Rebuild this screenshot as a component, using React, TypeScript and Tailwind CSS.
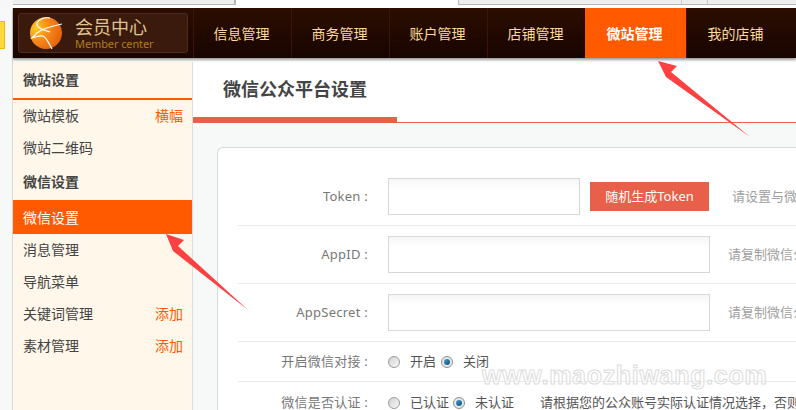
import React from 'react';

const font = "font-['Noto_Sans','Noto_Sans_CJK_SC',sans-serif]";

const navItems = ['信息管理', '商务管理', '账户管理', '店铺管理', '微站管理', '我的店铺'];

const Radio = ({ checked }: { checked?: boolean }) =>
  checked ? (
    <span className="flex h-3 w-3 shrink-0 items-center justify-center rounded-full border border-[#8a8f94] bg-[#e8e8e8]">
      <span className="h-[6px] w-[6px] rounded-full bg-gradient-to-br from-[#3f9fd0] to-[#0a4f7d]" />
    </span>
  ) : (
    <span className="h-3 w-3 shrink-0 rounded-full border border-[#9a9a9a] bg-gradient-to-br from-[#d0d0d0] to-[#fafafa]" />
  );

const SideRow = ({ label, action }: { label: string; action?: string }) => (
  <div className="flex h-8 items-center justify-between pb-[2px] pl-[10px] pr-[9px] text-[14px] text-[#444]">
    <span>{label}</span>
    {action && <span className="text-[#ff5a00]">{action}</span>}
  </div>
);

const FormRow = ({ label, children, className }: { label: string; children: React.ReactNode; className: string }) => (
  <div className={`flex items-center border-b border-[#e8ecea] ${className}`}>
    <div className="w-[130px] shrink-0 text-right text-[13px] tracking-[0.25px] text-[#777]">{label}</div>
    <div className="ml-5 flex items-center whitespace-nowrap text-[13px]">{children}</div>
  </div>
);

const TextBox = ({ width }: { width: string }) => (
  <div className={`h-[37px] shrink-0 border border-[#d8d8d8] bg-gradient-to-b from-[#f6f6f6] to-white to-30% ${width}`} />
);

export default function App() {
  return (
    <div className={`relative flex h-[410px] w-[796px] flex-col overflow-hidden bg-[#f6f9f8] ${font}`}>
      {/* browser strip */}
      <div className="flex h-2 shrink-0 bg-white">
        <div className="w-[13px] bg-[#f7f7f7]" />
        <div className="h-[5px] w-[223px] border-b border-r-2 border-[#b8b8b8] bg-[#eeeeee]" />
        <div className="ml-[222px] flex h-[5px] flex-1 border-b border-l border-[#b8b8b8] bg-[#eeeeee]">
          <div className="w-[223px] border-r border-[#c8c8c8]" />
          <div className="w-[26px] border-r border-[#c8c8c8]" />
        </div>
      </div>

      <div className="flex min-h-0 flex-1">
        <div className="w-[13px] shrink-0 border-r border-[#d8d8d8] pt-[13px]">
          <div className="h-7 w-[5px] border-y border-r border-[#f5b400] bg-[#ffd83a]" />
        </div>

        <div className="flex min-w-0 flex-1 flex-col">
          {/* top nav */}
          <div className="flex h-[50px] shrink-0 bg-gradient-to-b from-[#2c0e00] to-[#180500] shadow-[0_2px_2px_rgba(0,0,0,0.35)]">
            <div className="flex w-[180px] shrink-0 items-center pl-[5px]">
              <div className="flex h-10 w-[170px] items-center rounded-[3px] border border-[#4f2c18] bg-[#3a1a0c] pl-[11px]">
                <svg width="32" height="32" viewBox="0 0 32 32" className="shrink-0">
                  <defs>
                    <radialGradient id="ball" cx="0.2" cy="0.35" r="0.9">
                      <stop offset="0" stopColor="#ffcb25" />
                      <stop offset="0.45" stopColor="#f6891a" />
                      <stop offset="1" stopColor="#e25a0a" />
                    </radialGradient>
                  </defs>
                  <circle cx="16" cy="16" r="16" fill="url(#ball)" />
                  <path
                    d="M20 1C15 0 9 2 7 6C6 11 14 13 20 15M32 7C22 9 12 12 7 16C5 18 3 20 2 21C6 20 10 18 13 19C17 21 19 27 22 32"
                    fill="none"
                    stroke="#fff"
                    strokeWidth="1.2"
                  />
                </svg>
                <div className="ml-[13px] flex flex-col">
                  <span className="text-[18px] leading-[21px] text-[#e0c48f]">会员中心</span>
                  <span className="text-[11px] leading-[12px] tracking-[-0.1px] text-[#b07a1f]">Member center</span>
                </div>
              </div>
            </div>
            {navItems.map((item, i) => (
              <div
                key={item}
                className={
                  i === 4
                    ? 'flex w-[101px] shrink-0 items-center justify-center bg-[#ff5a00] pr-[2px] text-[14px] font-bold text-white'
                    : i === 5
                      ? 'flex w-[98px] shrink-0 items-center justify-center border-l border-[#3d1408] text-[14px] text-[#fdd99a]'
                      : 'flex w-[98px] shrink-0 items-center justify-center border-l border-[#3d1408] pr-[2px] text-[14px] text-[#fdd99a]'
                }
              >
                {item}
              </div>
            ))}
          </div>

          <div className="mt-1 flex min-h-0 flex-1">
            {/* sidebar */}
            <div className="w-[180px] shrink-0 border-r border-[#ddd] bg-[#fff7e9]">
              <div className="flex h-[38px] items-center border-b-2 border-[#ff5a00] pb-[2px] pl-[10px] text-[14px] font-bold text-[#444]">
                微站设置
              </div>
              <SideRow label="微站模板" action="横幅" />
              <SideRow label="微站二维码" />
              <div className="flex h-9 items-center pb-[2px] pl-[10px] text-[14px] font-bold text-[#444]">微信设置</div>
              <div className="flex h-[34px] items-center bg-[#ff5a00] pl-[10px] text-[14px] text-white">微信设置</div>
              <SideRow label="消息管理" />
              <SideRow label="导航菜单" />
              <SideRow label="关键词管理" action="添加" />
              <SideRow label="素材管理" action="添加" />
            </div>

            {/* main */}
            <div className="min-w-0 flex-1">
              <div className="h-[61px] border-b border-[#f0604a] bg-white">
                <div className="box-border flex h-[61px] w-[204px] items-center border-b-[6px] border-[#e9604a] pl-[30px] text-[18px] font-bold text-[#444]">
                  <span className="whitespace-nowrap">微信公众平台设置</span>
                </div>
              </div>

              <div className="ml-6 mr-[-20px] mt-6 h-[300px] rounded-tl-md border-l border-t border-[#d5dbd9] bg-white pl-5">
                <FormRow label="Token :" className="pb-[10px] pt-[30px]">
                  <TextBox width="w-[192px]" />
                  <button className="ml-[10px] h-[29px] w-[119px] bg-[#e9604a] text-[13px] text-white">随机生成Token</button>
                  <span className="ml-[23px] text-[#a0a0a0]">请设置与微信公众平台</span>
                </FormRow>
                <FormRow label="AppID :" className="py-[10px]">
                  <TextBox width="w-[322px]" />
                  <span className="ml-[18px] text-[#a0a0a0]">请复制微信公众平台</span>
                </FormRow>
                <FormRow label="AppSecret :" className="py-[10px]">
                  <TextBox width="w-[322px]" />
                  <span className="ml-[18px] text-[#a0a0a0]">请复制微信公众平台</span>
                </FormRow>
                <FormRow label="开启微信对接 :" className="h-10">
                  <Radio />
                  <span className="ml-[10px] text-[#555]">开启</span>
                  <span className="ml-[5px]"><Radio checked /></span>
                  <span className="ml-[10px] text-[#555]">关闭</span>
                </FormRow>
                <FormRow label="微信是否认证 :" className="h-[42px]">
                  <Radio />
                  <span className="ml-[10px] text-[#555]">已认证</span>
                  <span className="ml-[4px]"><Radio checked /></span>
                  <span className="ml-[10px] text-[#555]">未认证</span>
                  <span className="ml-[26px] text-[#555]">请根据您的公众账号实际认证情况选择，否则</span>
                </FormRow>
              </div>
            </div>
          </div>
        </div>
      </div>

      {/* watermark over the form */}
      <div className="pointer-events-none absolute left-[482px] top-[360px] whitespace-nowrap font-['Liberation_Sans',sans-serif] text-[25px] leading-[30px] font-bold tracking-[0.7px] text-white/40 [-webkit-text-stroke:1px_#dcdcdc]">
        www.maozhiwang.com
      </div>

      {/* annotation arrows */}
      <svg className="pointer-events-none absolute inset-0" width="796" height="410" viewBox="0 0 796 410">
        <polygon points="658,61 677,66 671,72 750,137 666,77" fill="#fb4141" />
        <polygon points="166,234 184,240 178,246 248,310 173,251" fill="#fb4141" />
      </svg>
    </div>
  );
}
